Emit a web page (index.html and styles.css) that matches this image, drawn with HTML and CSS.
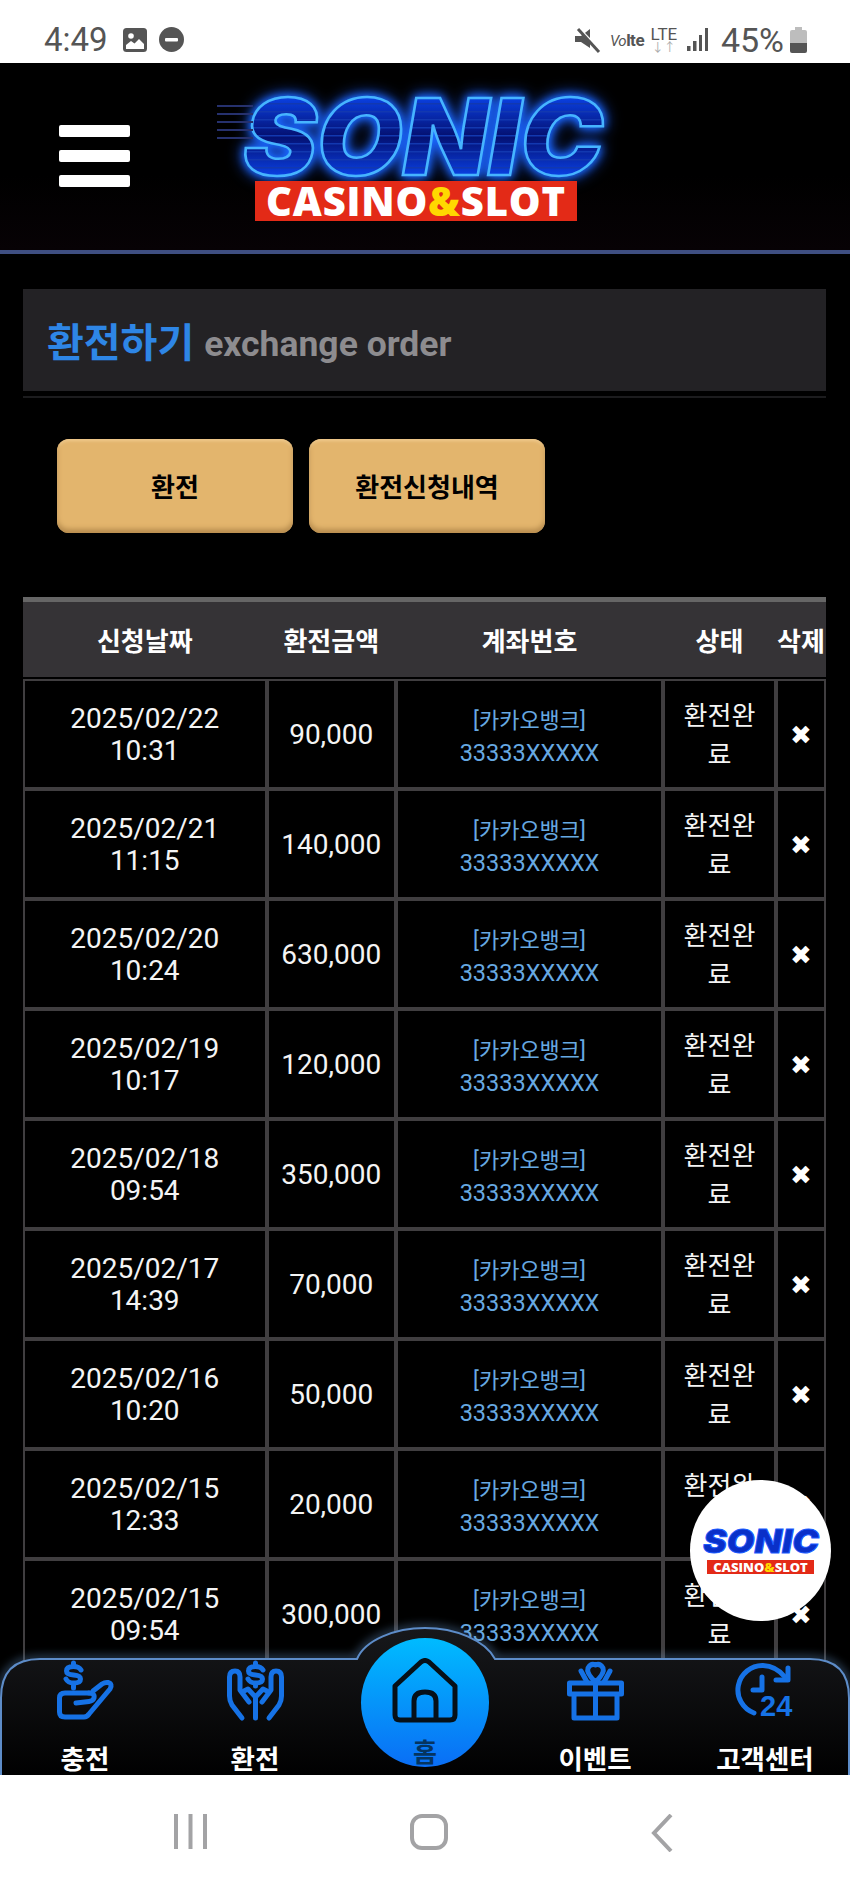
FILE: index.html
```html
<!DOCTYPE html>
<html lang="ko">
<head>
<title>환전하기</title>
<meta charset="utf-8" />
<meta name="viewport" content="width=device-width, initial-scale=1.0" />
<link rel="stylesheet" href="styles.css">
</head>
<body>
<svg class="defs" width="0" height="0">
  <defs>
    <linearGradient id="sonicgrad" x1="0" y1="0" x2="0" y2="1">
      <stop offset="0" stop-color="#0a3fe0"/>
      <stop offset="0.5" stop-color="#041070"/>
      <stop offset="1" stop-color="#0a3fe0"/>
    </linearGradient>
    <linearGradient id="navfill" x1="0" y1="0" x2="0" y2="1">
      <stop offset="0" stop-color="#17181b"/>
      <stop offset="1" stop-color="#000"/>
    </linearGradient>
    <pattern id="stripes" width="8" height="8" patternUnits="userSpaceOnUse">
      <rect width="8" height="1.500" fill="#1238b0"/>
    </pattern>
    <pattern id="sonicfill" width="380" height="145" patternUnits="userSpaceOnUse">
      <rect y="35" width="380" height="77" fill="url(#sonicgrad)"/>
      <rect y="35" width="380" height="77" fill="url(#stripes)"/>
    </pattern>
    <filter id="glow" x="-10%" y="-30%" width="120%" height="160%">
      <feGaussianBlur stdDeviation="5"/>
    </filter>
  </defs>
</svg>

<div class="statusbar">
  <div class="status-left">
    <span class="clock">4:49</span>
    <svg class="st-icon" width="24" height="24" viewBox="0 0 24 24"><rect width="24" height="24" rx="3.500" fill="#555"/><circle cx="8" cy="8" r="2.800" fill="#fff"/><path fill="#fff" d="M3 21v-4l5-4 3.500 2.500L16 11l5 5v5z"/></svg>
    <svg class="st-icon" width="25" height="25" viewBox="0 0 25 25"><circle cx="12.500" cy="12.500" r="12.500" fill="#555"/><rect x="6" y="11" width="13" height="3.500" rx="1" fill="#fff"/></svg>
  </div>
  <div class="status-right">
    <svg class="st-mute" width="26" height="24" viewBox="0 0 26 24"><path fill="#555" d="M0 8h6l9-7v19L6 14H0z"/><path stroke="#fff" stroke-width="2" d="M2 -2L24 21"/><path stroke="#555" stroke-width="3" d="M3 1l21 23"/></svg>
    <span class="volte">V<i>o</i><b>lte</b></span>
    <span class="lte"><span>LTE</span><small>↓↑</small></span>
    <svg class="st-signal" width="22" height="23" viewBox="0 0 22 23"><path fill="#555" d="M0 18h3.500v5H0zM6 13h3.500v10H6zM12 7h3v16h-3zM18 0h3v23h-3z"/></svg>
    <span class="batt-text">45%</span>
    <svg width="17" height="26" viewBox="0 0 17 26"><path fill="#bdbdbd" d="M5 0h7v3h3a2 2 0 0 1 2 2v11H0V5a2 2 0 0 1 2-2h3z"/><path fill="#555" d="M0 16h17v8a2 2 0 0 1-2 2H2a2 2 0 0 1-2-2z"/></svg>
  </div>
</div>

<div class="app">
  <header class="topbar">
    <div class="burger"><span></span><span></span><span></span></div>
    <div class="logo">
      <div class="speed"><span></span><span></span><span></span><span></span><span></span></div>
      <svg class="sonic" width="380" height="118" viewBox="0 0 380 118">
        <text class="sonic-text" x="4" y="112" textLength="360" lengthAdjust="spacingAndGlyphs">SONIC</text>
      </svg>
      <div class="redbar">CASINO<em>&amp;</em>SLOT</div>
    </div>
  </header>

  <main class="content">
    <div class="title-box">
      <h1>환전하기</h1>
      <span>exchange order</span>
    </div>
    <div class="tabs">
      <a class="tab">환전</a>
      <a class="tab">환전신청내역</a>
    </div>

    <table class="list">
      <colgroup>
        <col class="c1"><col class="c2"><col class="c3"><col class="c4"><col class="c5">
      </colgroup>
      <thead>
        <tr><th>신청날짜</th><th>환전금액</th><th>계좌번호</th><th>상태</th><th>삭제</th></tr>
      </thead>
      <tbody>
        <tr><td>2025/02/22<br>10:31</td><td>90,000</td><td class="bank"><span>[카카오뱅크]</span><br>33333XXXXX</td><td class="state">환전완료</td><td class="del">✖</td></tr>
        <tr><td>2025/02/21<br>11:15</td><td>140,000</td><td class="bank"><span>[카카오뱅크]</span><br>33333XXXXX</td><td class="state">환전완료</td><td class="del">✖</td></tr>
        <tr><td>2025/02/20<br>10:24</td><td>630,000</td><td class="bank"><span>[카카오뱅크]</span><br>33333XXXXX</td><td class="state">환전완료</td><td class="del">✖</td></tr>
        <tr><td>2025/02/19<br>10:17</td><td>120,000</td><td class="bank"><span>[카카오뱅크]</span><br>33333XXXXX</td><td class="state">환전완료</td><td class="del">✖</td></tr>
        <tr><td>2025/02/18<br>09:54</td><td>350,000</td><td class="bank"><span>[카카오뱅크]</span><br>33333XXXXX</td><td class="state">환전완료</td><td class="del">✖</td></tr>
        <tr><td>2025/02/17<br>14:39</td><td>70,000</td><td class="bank"><span>[카카오뱅크]</span><br>33333XXXXX</td><td class="state">환전완료</td><td class="del">✖</td></tr>
        <tr><td>2025/02/16<br>10:20</td><td>50,000</td><td class="bank"><span>[카카오뱅크]</span><br>33333XXXXX</td><td class="state">환전완료</td><td class="del">✖</td></tr>
        <tr><td>2025/02/15<br>12:33</td><td>20,000</td><td class="bank"><span>[카카오뱅크]</span><br>33333XXXXX</td><td class="state">환전완료</td><td class="del">✖</td></tr>
        <tr><td>2025/02/15<br>09:54</td><td>300,000</td><td class="bank"><span>[카카오뱅크]</span><br>33333XXXXX</td><td class="state">환전완료</td><td class="del">✖</td></tr>
      </tbody>
    </table>
  </main>

  <div class="float-logo">
    <svg class="mini-svg" width="122" height="40" viewBox="0 0 122 40">
      <text class="sonic-mini" x="3" y="33" textLength="116" lengthAdjust="spacingAndGlyphs">SONIC</text>
    </svg>
    <div class="redbar-mini">CASINO<em>&amp;</em>SLOT</div>
  </div>

  <nav class="bottomnav">
    <svg class="nav-bg" width="850" height="155" viewBox="0 0 850 155">
      <path class="nav-halo" filter="url(#glow)" d="M1 160V78Q1 39 40 39H357C365 20 395 8 425 8S485 20 495 39H810Q849 39 849 78V160"/>
      <path class="nav-shape" fill="url(#navfill)" d="M1 160V78Q1 39 40 39H357C365 20 395 8 425 8S485 20 495 39H810Q849 39 849 78V160"/>
    </svg>

    <a class="nav-item">
      <svg class="nav-icon" width="57" height="57" viewBox="0 0 57 57">
        <path d="M32 30H8Q2.500 30 2.500 35V49Q2.500 54 8 54H27Q30 54 32 51L53 26Q56 21 51 19.500Q48 19 45 21L36 28"/>
        <path d="M32 30Q38 30 37 35Q36 38 32 38.500L19 40"/>
        <path d="M24 7Q22 3.500 16.500 3.500Q9.500 3.500 9.500 8Q9.500 11.500 16.500 12Q23.500 12.500 23.500 16Q23.500 20 16.500 20Q11 20 9 16M16.500 0V3.500M16.500 20V25"/>
      </svg>
      <span>충전</span>
    </a>
    <a class="nav-item">
      <svg class="nav-icon" width="57" height="57" viewBox="0 0 57 57">
        <path d="M15 55L5 42Q2.500 38 2.500 33V14Q2.500 8 8 8Q13 8 13 14V27L22 39"/>
        <path d="M42 55L52 42Q54.500 38 54.500 33V14Q54.500 8 49 8Q44 8 44 14V27L35 39"/>
        <path d="M17 28L21 26L28.500 34V55M40 28L36 26L28.500 34"/>
        <path d="M36 7Q34 3.500 28.500 3.500Q21.500 3.500 21.500 8Q21.500 11.500 28.500 12Q35.500 12.500 35.500 16Q35.500 20 28.500 20Q23 20 21 16M28.500 0V3.500M28.500 20V23"/>
      </svg>
      <span>환전</span>
    </a>
    <a class="nav-item home">
      <div class="home-circle">
        <svg width="66" height="65" viewBox="0 0 66 65"><path d="M3 28L29 4Q33 1 37 4L63 28V57Q63 62 58 62H8Q3 62 3 57Z"/><path d="M22 62V43Q22 34 33 34Q44 34 44 43V62"/></svg>
        <span>홈</span>
      </div>
    </a>
    <a class="nav-item">
      <svg class="nav-icon" width="57" height="57" viewBox="0 0 57 57">
        <path d="M2.500 20H54.500V31H2.500ZM7 31V55H50V31M28.500 20V55"/>
        <path d="M28.500 19Q19 10 21 5Q24 0 28.500 2Q33 0 36 5Q38 10 28.500 19M14 8L20 19M43 8L37 19"/>
      </svg>
      <span>이벤트</span>
    </a>
    <a class="nav-item">
      <svg class="nav-icon" width="57" height="57" viewBox="0 0 57 57">
        <path d="M17 50A24.500 24.500 0 0 1 26 2.500Q39 3 48 14"/>
        <path d="M51 5V17H39"/>
        <path d="M25 14V27H16"/>
        <text class="icon-24" x="23" y="53">24</text>
      </svg>
      <span>고객센터</span>
    </a>
  </nav>
</div>

<div class="softkeys">
  <svg width="33" height="35" viewBox="0 0 33 35"><path d="M2 0v35M16.500 0v35M31 0v35"/></svg>
  <svg width="38" height="36" viewBox="0 0 38 36"><rect x="2" y="2" width="34" height="32" rx="10"/></svg>
  <svg width="22" height="38" viewBox="0 0 22 38"><path d="M20 1L3 19L20 37"/></svg>
</div>
</body>
</html>
```

FILE: styles.css
```css
* {
  box-sizing: border-box;
}

html, body {
  margin: 0;
  padding: 0;
  width: 850px;
  height: 1889px;
  overflow: hidden;
}

body {
  display: flex;
  flex-direction: column;
  background: #fff;
  font-family: Roboto, "Noto Sans CJK KR", sans-serif;
}

.defs {
  position: absolute;
}

/* android status bar */
.statusbar {
  height: 63px;
  padding: 16px 43px 0 44px;
  display: flex;
  justify-content: space-between;
  align-items: center;
  color: #555;
  background: #fff;
  flex-shrink: 0;
}

.status-left, .status-right {
  display: flex;
  align-items: center;
}

.clock {
  font-size: 33px;
  width: 79px;
}

.status-left .st-icon {
  margin-right: 12px;
}

.status-right svg {
  display: block;
  overflow: visible;
}

.st-mute {
  margin-right: 9px;
}

.volte {
  width: 34px;
  margin-right: 7px;
  font-size: 15px;
  white-space: nowrap;
  letter-spacing: -0.500px;
  font-style: italic;
}

.volte b {
  font-size: 17px;
  font-style: normal;
}

.lte {
  width: 26px;
  display: flex;
  flex-direction: column;
  align-items: center;
  font-size: 17px;
  line-height: 17px;
  margin-right: 10px;
}

.lte small {
  font-size: 12px;
  line-height: 11px;
  color: #aaa;
  white-space: nowrap;
}

.batt-text {
  font-size: 34px;
  margin: 0 6px 0 12px;
}

/* app */
.app {
  position: relative;
  flex: 1;
  overflow: hidden;
  background: #000;
  color: #fff;
}

.topbar {
  height: 191px;
  border-bottom: 4px solid #3f4f82;
  display: flex;
  position: relative;
  background: linear-gradient(#000 60%, #070205);
}

.burger {
  width: 71px;
  margin: 62px 0 0 59px;
  display: flex;
  flex-direction: column;
  gap: 13px;
}

.burger span {
  height: 12px;
  background: #fff;
  border-radius: 2px;
}

.logo {
  position: absolute;
  left: 213px;
  top: 0;
  width: 400px;
}

.sonic {
  display: block;
  margin-left: 26px;
  overflow: visible;
}

.sonic-text, .sonic-mini {
  font-family: Inter, "Liberation Sans", sans-serif;
  font-size: 106px;
  font-weight: 900;
  font-style: italic;
}

.sonic-text {
  fill: url(#sonicfill);
  stroke: #46b4ff;
  stroke-width: 2.500px;
  filter: drop-shadow(0 0 4px #1a6cff) drop-shadow(0 0 7px #1a5cff);
}

.speed {
  position: absolute;
  left: 4px;
  top: 42px;
  display: flex;
  flex-direction: column;
  gap: 6px;
}

.speed span {
  display: block;
  width: 36px;
  height: 2px;
  background: #26316e;
}

.redbar {
  position: relative;
  width: 322px;
  height: 40px;
  margin: 0 0 0 42px;
  background: #e32a17;
  color: #fff;
  font-family: "Open Sans", sans-serif;
  font-weight: 800;
  font-size: 40px;
  line-height: 40px;
  text-align: center;
  white-space: nowrap;
  letter-spacing: 0.800px;
}

.redbar em, .redbar-mini em {
  font-style: normal;
  color: #ffd800;
}

/* page body */
.content {
  padding: 35px 24px 0 23px;
}

.title-box {
  height: 102px;
  background: #232225;
  display: flex;
  align-items: center;
  padding: 8px 0 0 24px;
  gap: 10px;
  position: relative;
}

.title-box::after {
  content: "";
  position: absolute;
  left: 0;
  right: 0;
  bottom: -7px;
  height: 2px;
  background: #1c1c1e;
}

.title-box h1 {
  margin: 0;
  font-size: 40px;
  line-height: 44px;
  font-weight: 700;
  color: #2e86e6;
}

.title-box span {
  font-size: 35.500px;
  font-weight: 700;
  color: #8d8c8f;
}

.tabs {
  display: flex;
  gap: 16px;
  margin: 48px 0 0 34px;
}

.tab {
  width: 236px;
  height: 94px;
  border-radius: 12px;
  background: #e3b56d;
  box-shadow: inset 0 -4px 5px #b88d4f, inset 0 2px 3px #f0cb90;
  color: #000;
  font-size: 26px;
  font-weight: 700;
  padding-bottom: 2px;
  display: flex;
  align-items: center;
  justify-content: center;
}

.list {
  margin-top: 64px;
  width: 803px;
  table-layout: fixed;
  border-collapse: separate;
  border-spacing: 0;
}

.c1 { width: 243.5px; }
.c2 { width: 129.5px; }
.c3 { width: 267px; }
.c4 { width: 113px; }
.c5 { width: 50px; }

.list th {
  height: 82px;
  background: #353336;
  border-top: 5px solid #666;
  border-bottom: 2px solid #000;
  font-size: 26px;
  font-weight: 700;
  color: #fff;
  padding: 0;
  white-space: nowrap;
}

.list td {
  height: 110px;
  padding: 2px 0 0;
  border: 2px solid #403e40;
  text-align: center;
  font-size: 28px;
  line-height: 32px;
  color: #f4f4f4;
}

.list td.bank {
  font-size: 23.500px;
  line-height: 33px;
  padding-top: 6px;
  color: #67a9e2;
}

.bank span {
  font-size: 22px;
}

.list td.state {
  font-size: 26px;
  line-height: 39px;
  padding: 4px 12px 0;
  word-break: break-all;
}

.list td.del {
  font-family: "DejaVu Sans", sans-serif;
  font-size: 26px;
  color: #fff;
}

/* round logo, floats over the table */
.float-logo {
  position: absolute;
  left: 690px;
  top: 1417px;
  width: 141px;
  height: 141px;
  border-radius: 50%;
  background: #fff;
  display: flex;
  flex-direction: column;
  align-items: center;
  justify-content: center;
}

.mini-svg {
  display: block;
  margin-top: -8px;
  overflow: visible;
}

.sonic-mini {
  font-size: 33px;
  fill: #0a30c8;
  stroke: #1a5cff;
  stroke-width: 1px;
}

.redbar-mini {
  width: 107px;
  height: 14px;
  background: #e32a17;
  color: #fff;
  font-family: "Open Sans", sans-serif;
  font-weight: 800;
  font-size: 13px;
  line-height: 14px;
  text-align: center;
  white-space: nowrap;
}

/* fixed bottom nav */
.bottomnav {
  position: absolute;
  left: 0;
  bottom: 0;
  width: 850px;
  height: 155px;
  display: grid;
  grid-template-columns: repeat(5, 170px);
  padding-top: 43px;
}

.nav-bg {
  position: absolute;
  left: 0;
  top: 0;
  overflow: visible;
}

.nav-shape {
  stroke: #5d8cc8;
  stroke-width: 2px;
}

.nav-halo {
  fill: none;
  stroke: #6c9bd0;
  stroke-width: 5px;
  opacity: 0.6;
}

.nav-item {
  position: relative;
  display: flex;
  flex-direction: column;
  align-items: center;
  gap: 24px;
  color: #fff;
  font-size: 26.500px;
  font-weight: 700;
  line-height: 32px;
}

.nav-icon {
  display: block;
  fill: none;
  stroke: #1672e6;
  stroke-width: 5px;
  stroke-linejoin: round;
  stroke-linecap: round;
  overflow: visible;
}

.icon-24 {
  fill: #1672e6;
  stroke: none;
  font-family: "Liberation Sans", sans-serif;
  font-weight: 700;
  font-size: 29px;
}

.home-circle {
  width: 128px;
  height: 129px;
  margin-top: -25px;
  border-radius: 50%;
  background: linear-gradient(#00bbff, #0a6ef5);
  display: flex;
  flex-direction: column;
  align-items: center;
  padding-top: 20px;
  overflow: hidden;
  color: #05345f;
}

.home-circle svg {
  display: block;
  flex-shrink: 0;
  fill: none;
  stroke: #061018;
  stroke-width: 5px;
  stroke-linejoin: round;
}

.home-circle span {
  font-size: 26px;
  line-height: 30px;
  margin-top: 15px;
}

/* android soft keys */
.softkeys {
  height: 114px;
  flex-shrink: 0;
  background: #fff;
  display: flex;
  align-items: flex-start;
  padding: 39px 0 0 174px;
  gap: 203px;
}

.softkeys svg {
  fill: none;
  stroke: #a3a3a5;
  stroke-width: 4px;
  display: block;
}
```
